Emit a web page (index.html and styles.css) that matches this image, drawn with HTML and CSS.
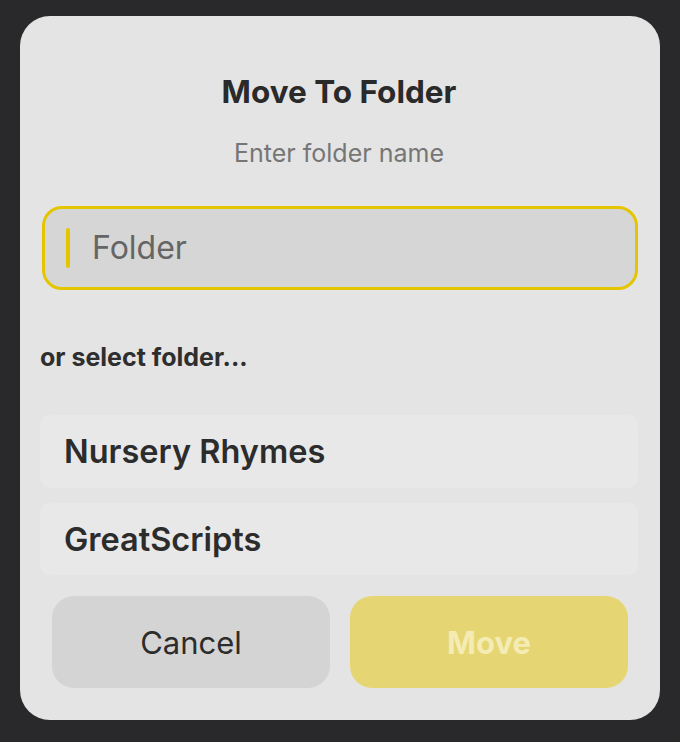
FILE: index.html
```html
<!DOCTYPE html>
<html lang="en">
<head>
<meta charset="utf-8">
<title>Move To Folder</title>
<link rel="stylesheet" href="styles.css">
</head>
<body>
<div class="dialog">
  <h1 class="title">Move To Folder</h1>
  <p class="subtitle">Enter folder name</p>
  <div class="input">
    <span class="caret"></span>
    <span class="placeholder">Folder</span>
  </div>
  <p class="section-label">or select folder...</p>
  <ul class="folders">
    <li class="folder">Nursery Rhymes</li>
    <li class="folder">GreatScripts</li>
  </ul>
  <div class="actions">
    <button class="btn btn-cancel">Cancel</button>
    <button class="btn btn-move">Move</button>
  </div>
</div>
</body>
</html>
```

FILE: styles.css
```css
* { box-sizing: border-box; }
html, body {
  margin: 0;
  padding: 0;
  width: 680px;
  height: 742px;
  background: #29292b;
  font-family: Inter, "Noto Sans", "Liberation Sans", sans-serif;
  overflow: hidden;
}
.dialog {
  margin: 16px 0 0 20px;
  width: 640px;
  height: 704px;
  background: #e4e4e4;
  border-radius: 30px;
  padding: 58px 22px 0 20px;
  display: flex;
  flex-direction: column;
}
.title {
  margin: 0;
  font-size: 31.5px;
  line-height: 36px;
  font-weight: 700;
  color: #2a2a2a;
  text-align: center;
}
.subtitle {
  margin: 28px 0 0;
  font-size: 25px;
  line-height: 30px;
  font-weight: 400;
  color: #767676;
  text-align: center;
}
.input {
  margin: 38px 0 0 2px;
  height: 84px;
  border: 3px solid #e4c600;
  border-radius: 20px;
  background: #d6d6d6;
  display: flex;
  align-items: center;
  padding-left: 21px;
}
.caret {
  width: 4px;
  height: 40px;
  background: #e4c600;
  border-radius: 2px;
}
.placeholder {
  margin-left: 22px;
  font-size: 32px;
  color: #656565;
  line-height: 40px;
}
.section-label {
  margin: 53px 0 0;
  font-size: 25px;
  line-height: 28px;
  font-weight: 700;
  color: #2e2e2e;
}
.folders {
  list-style: none;
  margin: 44px 0 0;
  padding: 0;
  display: flex;
  flex-direction: column;
  gap: 15px;
}
.folder {
  height: 73px;
  background: #e8e8e8;
  border-radius: 10px;
  padding-left: 24px;
  display: flex;
  align-items: center;
  font-size: 32.5px;
  font-weight: 600;
  color: #2c2c2c;
}
.folder + .folder { height: 72px; }
.actions {
  margin: 21px 10px 0 12px;
  display: flex;
  gap: 20px;
}
.btn {
  flex: 1;
  height: 92px;
  border: none;
  border-radius: 22px;
  font-family: Inter, "Noto Sans", "Liberation Sans", sans-serif;
  font-size: 31px;
  padding: 0;
}
.btn-cancel {
  background: #d4d4d4;
  color: #2c2c2c;
  font-weight: 400;
}
.btn-move {
  background: #e5d673;
  color: #f4ecb4;
  font-weight: 700;
}
```
